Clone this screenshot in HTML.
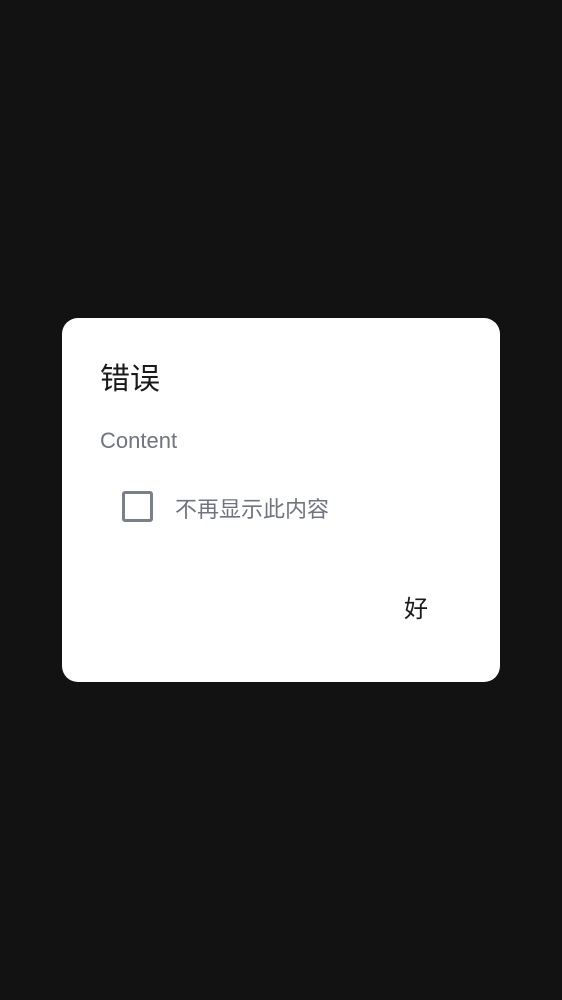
<!DOCTYPE html>
<html><head><meta charset="utf-8"><style>
html,body{margin:0;padding:0;width:562px;height:1000px;background:#121212;overflow:hidden;font-family:"Liberation Sans","Noto Sans CJK SC",sans-serif}
.d{position:absolute;left:62px;top:318px;width:438px;height:364px;background:#fff;border-radius:16px}
.t{position:absolute;left:38px;top:42px;font-size:30px;line-height:40px;color:#1a1a1a}
.c{position:absolute;left:38px;top:109px;font-size:22px;line-height:28px;color:#6f7480}
.cb{position:absolute;left:60px;top:173px;width:25px;height:25px;border:3px solid #7a808a;border-radius:3px}
.l{position:absolute;left:113px;top:177px;font-size:22px;line-height:30px;color:#6f7480}
.ok{position:absolute;left:342px;top:276px;font-size:24px;line-height:32px;color:#1a1a1a}
</style></head><body>
<div class="d">
<div class="t">错误</div>
<div class="c">Content</div>
<div class="cb"></div>
<div class="l">不再显示此内容</div>
<div class="ok">好</div>
</div>
</body></html>
